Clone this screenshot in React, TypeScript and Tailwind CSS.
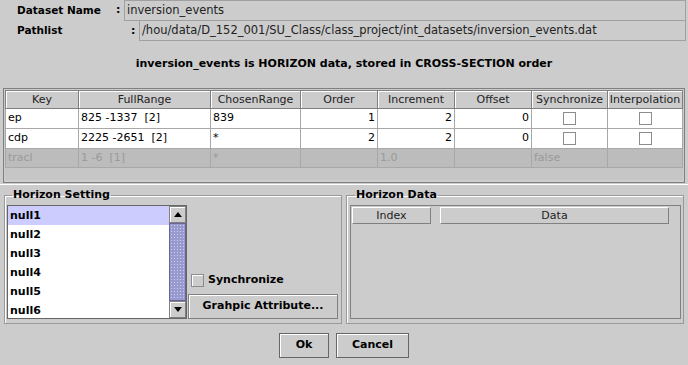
import React from 'react'

const cols = [
  { name: 'Key', w: 73 },
  { name: 'FullRange', w: 132 },
  { name: 'ChosenRange', w: 90 },
  { name: 'Order', w: 77 },
  { name: 'Increment', w: 77 },
  { name: 'Offset', w: 77 },
  { name: 'Synchronize', w: 76 },
  { name: 'Interpolation', w: 75 },
]

const rows = [
  { key: 'ep', full: '825 -1337  [2]', chosen: '839', order: '1', inc: '2', off: '0' },
  { key: 'cdp', full: '2225 -2651  [2]', chosen: '*', order: '2', inc: '2', off: '0' },
]

const items = ['null1', 'null2', 'null3', 'null4', 'null5', 'null6']

function Check() {
  return <div className="mx-auto h-[13px] w-[13px] border border-[#8c8c8c] bg-white" />
}

function Arrow({ up }: { up?: boolean }) {
  return (
    <div className="flex h-[17px] w-[17px] items-center justify-center border border-[#808080] bg-[#cccccc] shadow-[inset_1px_1px_0_#ffffff]">
      <svg width="8" height="5" viewBox="0 0 8 5">
        {up ? <path d="M0 5 L4 0 L8 5 Z" fill="#000" /> : <path d="M0 0 L4 5 L8 0 Z" fill="#000" />}
      </svg>
    </div>
  )
}

export default function App() {
  return (
    <div className="h-[365px] w-[688px] overflow-hidden bg-[#cccccc] font-['DejaVu_Sans',Verdana,sans-serif] text-[11px] text-black">
      {/* Header fields */}
      <div className="h-[88px]">
        <div className="flex h-[21px] items-center">
          <span className="w-[116px] pl-[17px] text-[10.5px] font-bold">Dataset Name</span>
          <span className="w-[8px] font-bold">:</span>
          <div className="mr-[2px] flex h-[21px] flex-1 items-center border border-[#a0a0a0] pl-[2px] text-[11.5px] text-[#222]">inversion_events</div>
        </div>
        <div className="flex h-[20px] items-center">
          <span className="w-[131px] pl-[17px] text-[10.5px] font-bold">Pathlist</span>
          <span className="w-[8px] font-bold">:</span>
          <div className="mr-[2px] flex h-[20px] flex-1 items-center border border-t-0 border-[#a0a0a0] pl-[2px] text-[11.5px] text-[#222]">
            /hou/data/D_152_001/SU_Class/class_project/int_datasets/inversion_events.dat
          </div>
        </div>
        <div className="flex h-[46px] items-center justify-center font-bold">
          inversion_events is HORIZON data, stored in CROSS-SECTION order
        </div>
      </div>

      {/* Table */}
      <div className="mx-[3px] h-[95px] border border-[#808080] p-px">
        <table className="w-[677px] table-fixed border-collapse">
          <colgroup>
            {cols.map(c => (
              <col key={c.name} style={{ width: c.w }} />
            ))}
          </colgroup>
          <thead>
            <tr className="h-[18px]">
              {cols.map(c => (
                <th key={c.name} className="overflow-hidden whitespace-nowrap border border-[#808080] bg-[#cccccc] p-0 text-center font-normal leading-[16px] text-[#222] shadow-[inset_1px_1px_0_#ffffff]">
                  {c.name}
                </th>
              ))}
            </tr>
          </thead>
          <tbody>
            {rows.map(r => (
              <tr key={r.key} className="h-[20px] bg-white">
                <td className="border border-[#a8a8a8] px-[2px]">{r.key}</td>
                <td className="whitespace-pre border border-[#a8a8a8] px-[2px]">{r.full}</td>
                <td className="border border-[#a8a8a8] px-[2px]">{r.chosen}</td>
                <td className="border border-[#a8a8a8] px-[2px] text-right">{r.order}</td>
                <td className="border border-[#a8a8a8] px-[2px] text-right">{r.inc}</td>
                <td className="border border-[#a8a8a8] px-[2px] text-right">{r.off}</td>
                <td className="border border-[#a8a8a8]"><Check /></td>
                <td className="border border-[#a8a8a8]"><Check /></td>
              </tr>
            ))}
            <tr className="h-[19px] bg-[#bcbcbc] text-[#9a9a9a]">
              <td className="border border-[#a8a8a8] px-[2px]">tracl</td>
              <td className="whitespace-pre border border-[#a8a8a8] px-[2px]">1 -6  [1]</td>
              <td className="border border-[#a8a8a8] px-[2px]">*</td>
              <td className="border border-[#a8a8a8]"></td>
              <td className="border border-[#a8a8a8] px-[2px]">1.0</td>
              <td className="border border-[#a8a8a8]"></td>
              <td className="border border-[#a8a8a8] px-[2px]">false</td>
              <td className="border border-[#a8a8a8]"></td>
            </tr>
          </tbody>
        </table>
        <div className="h-[12px] bg-[#c6c6c6]" />
      </div>

      <div className="mt-px h-px bg-white" />

      {/* Lower panels */}
      <div className="mt-[2px] flex gap-[4px] px-[4px]">
        <fieldset className="h-[137px] w-[338px] border border-[#999999] pb-[3px] pl-[2px] pr-[3px] shadow-[inset_1px_1px_0_#ffffff]">
          <legend className="ml-[5px] px-px font-bold">Horizon Setting</legend>
          <div className="mt-px flex">
            <div className="flex h-[114px] w-[180px] border border-[#666666]">
              <div className="flex-1 bg-white">
                {items.map((it, i) => (
                  <div key={it} className={`h-[19px] pl-[2px] font-bold leading-[19px] ${i === 0 ? 'bg-[#ccccff]' : ''}`}>
                    {it}
                  </div>
                ))}
              </div>
              <div className="flex w-[17px] flex-col">
                <Arrow up />
                <div className="flex-1 border border-[#666699] bg-[#9999cc] bg-[radial-gradient(#ccccff_0.8px,transparent_0.8px)] bg-size-[3px_3px]" />
                <Arrow />
              </div>
            </div>
            <div className="flex flex-1 flex-col justify-end pl-px">
              <div className="mb-[5px] flex items-center gap-[4px] pl-[3px]">
                <div className="h-[13px] w-[13px] border border-[#8c8c8c] bg-[#cccccc] shadow-[inset_1px_1px_0_#ffffff]" />
                <span className="font-bold">Synchronize</span>
              </div>
              <div className="flex h-[25px] items-center justify-center border border-[#808080] font-bold shadow-[inset_1px_1px_0_#ffffff]">
                Grahpic Attribute...
              </div>
            </div>
          </div>
        </fieldset>

        <fieldset className="h-[137px] w-[338px] border border-[#999999] pb-[3px] pl-[3px] pr-[2px] shadow-[inset_1px_1px_0_#ffffff]">
          <legend className="ml-[5px] px-px font-bold">Horizon Data</legend>
          <div className="mt-px h-[114px] w-[331px] border border-[#808080] pl-px pt-px">
            <div className="flex h-[17px] text-[#222]">
              <div className="w-[79px] border border-t-white border-l-white border-[#808080] text-center leading-[15px]">Index</div>
              <div className="ml-[9px] w-[229px] border border-t-white border-l-white border-[#808080] text-center leading-[15px]">Data</div>
            </div>
          </div>
        </fieldset>
      </div>

      {/* Buttons */}
      <div className="mt-[9px] flex justify-center gap-[7px]">
        <div className="flex h-[25px] w-[50px] items-center justify-center border border-[#666666] font-bold shadow-[inset_1px_1px_0_#ffffff]">Ok</div>
        <div className="flex h-[25px] w-[73px] items-center justify-center border border-[#666666] font-bold shadow-[inset_1px_1px_0_#ffffff]">Cancel</div>
      </div>
    </div>
  )
}
